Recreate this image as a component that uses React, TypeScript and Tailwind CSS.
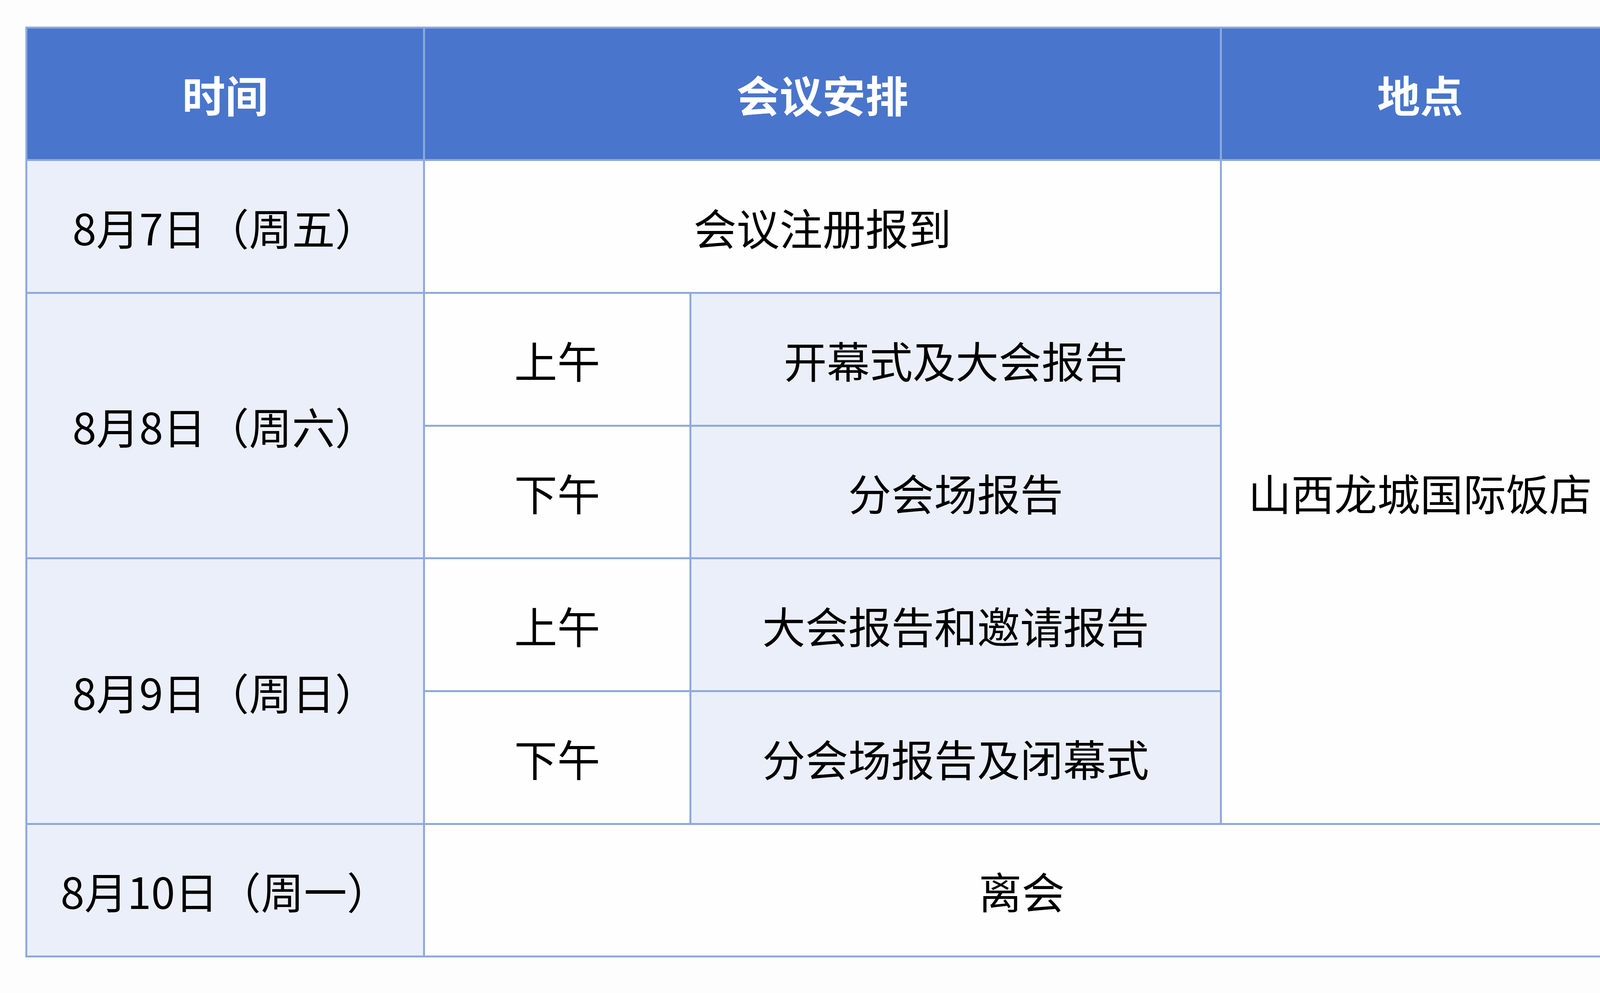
import React from "react";

const font = { fontFamily: '"Noto Sans CJK SC", "Noto Sans", sans-serif' };

function Cell({
  children,
  className = "",
}: {
  children?: React.ReactNode;
  className?: string;
}) {
  return (
    <div
      className={`flex items-center justify-center text-[110px] leading-none text-black ${className}`}
    >
      {children}
    </div>
  );
}

export default function App() {
  const light = "bg-[#ebeff9]";
  const white = "bg-[#fefefe]";
  return (
    <div
      className="min-h-screen w-full bg-[#fdfdfd] pl-[65px] pt-[68px]"
      style={font}
    >
      <div className="grid w-[4083px] grid-cols-[1013px_677px_1353px_1015px] grid-rows-[334px_335px_335px_334px_335px_335px_334px] gap-[5px] bg-[#8eaadb] p-[5px]">
        {/* header */}
        <Cell className="bg-[#4975cc] font-bold text-white">时间</Cell>
        <Cell className="col-span-2 bg-[#4975cc] font-bold text-white">
          会议安排
        </Cell>
        <Cell className="bg-[#4975cc] font-bold text-white">地点</Cell>

        {/* row 1 */}
        <Cell className={light}>8月7日（周五）</Cell>
        <Cell className={`col-span-2 ${white}`}>会议注册报到</Cell>
        <Cell className={`row-span-5 ${white}`}>山西龙城国际饭店</Cell>

        {/* rows 2-3 */}
        <Cell className={`row-span-2 ${light}`}>8月8日（周六）</Cell>
        <Cell className={white}>上午</Cell>
        <Cell className={light}>开幕式及大会报告</Cell>
        <Cell className={white}>下午</Cell>
        <Cell className={light}>分会场报告</Cell>

        {/* rows 4-5 */}
        <Cell className={`row-span-2 ${light}`}>8月9日（周日）</Cell>
        <Cell className={white}>上午</Cell>
        <Cell className={light}>大会报告和邀请报告</Cell>
        <Cell className={white}>下午</Cell>
        <Cell className={light}>分会场报告及闭幕式</Cell>

        {/* row 6 */}
        <Cell className={light}>8月10日（周一）</Cell>
        <Cell className={`col-span-3 ${white}`}>离会</Cell>
      </div>
    </div>
  );
}
